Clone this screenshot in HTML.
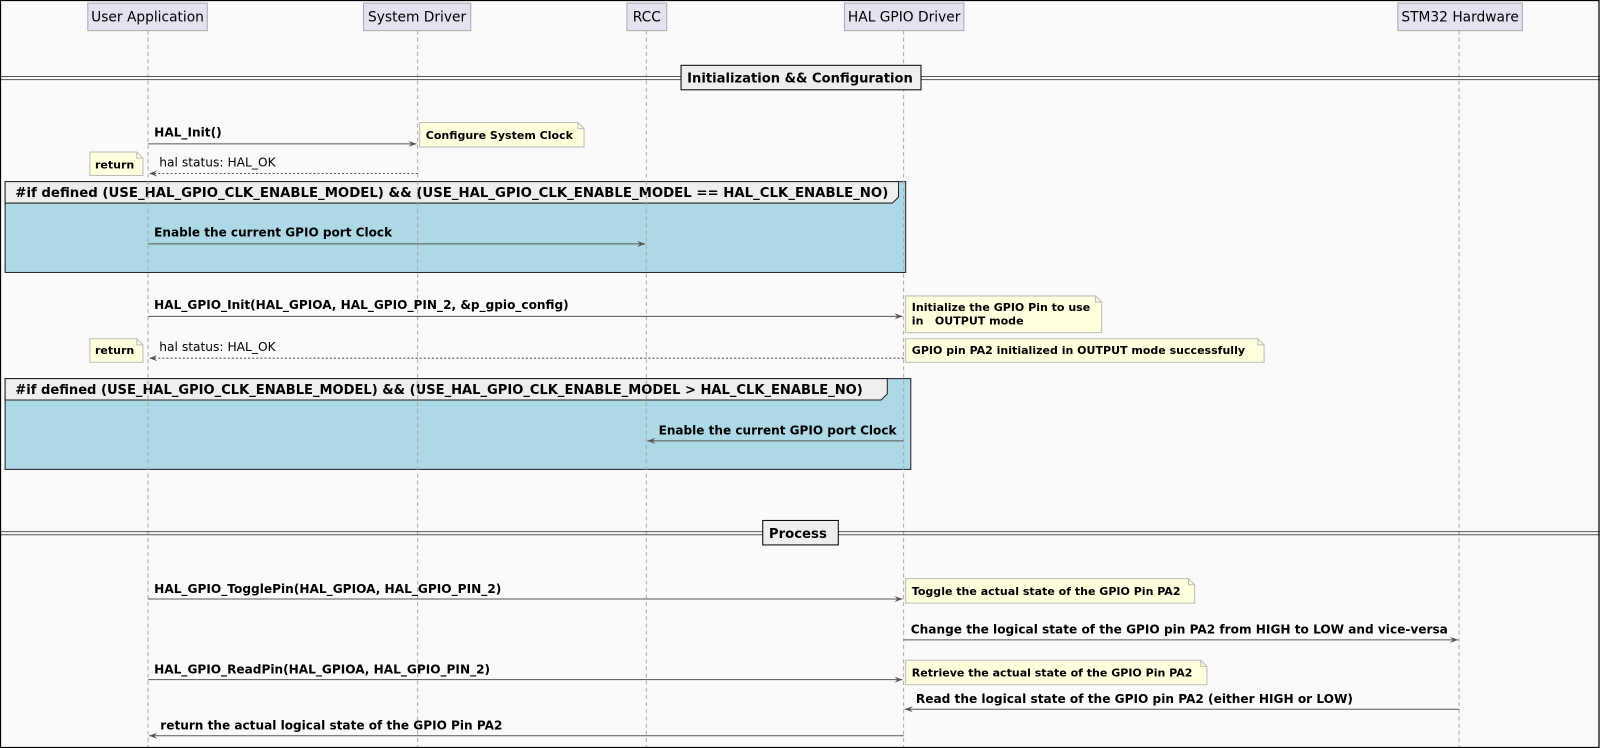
<!DOCTYPE html>
<html><head><meta charset="utf-8"><style>
html,body{margin:0;padding:0;background:#fafafa;}
svg{display:block;}
text{font-family:"DejaVu Sans","Liberation Sans",sans-serif;fill:#000;}
.b{font-weight:bold;font-size:11.9px;}
.n{font-weight:bold;font-size:10.8px;}
.p{font-size:13.5px;}
.g{font-weight:bold;font-size:13px;}
.ll{stroke:#aaa;stroke-dasharray:4,3;stroke-width:1;}
.ar{stroke:#555;stroke-width:1;fill:none;}
.dar{stroke:#555;stroke-width:1;stroke-dasharray:2,2;fill:none;}
.note{fill:#ffffdd;stroke:#bbb;stroke-width:1;}
.pt{fill:#e2e2f0;stroke:#aaa;stroke-width:1;}
</style></head><body>
<svg width="1600" height="748" viewBox="0 0 1567 733" preserveAspectRatio="none" xmlns="http://www.w3.org/2000/svg">
<rect x="0" y="0" width="1567" height="733" fill="#fafafa"/>
<rect x="5" y="178" width="882" height="89" fill="#add8e6" stroke="#222" stroke-width="1"/>
<path d="M5 178 H880 V193 L874 199 H5 Z" fill="#eeeeee" stroke="#222" stroke-width="1"/>
<text class="g" x="15" y="193" textLength="855" lengthAdjust="spacingAndGlyphs">#if defined (USE_HAL_GPIO_CLK_ENABLE_MODEL) &amp;&amp; (USE_HAL_GPIO_CLK_ENABLE_MODEL == HAL_CLK_ENABLE_NO)</text>
<rect x="5" y="371" width="887" height="89" fill="#add8e6" stroke="#222" stroke-width="1"/>
<path d="M5 371 H869 V386 L863 392 H5 Z" fill="#eeeeee" stroke="#222" stroke-width="1"/>
<text class="g" x="15" y="386" textLength="830" lengthAdjust="spacingAndGlyphs">#if defined (USE_HAL_GPIO_CLK_ENABLE_MODEL) &amp;&amp; (USE_HAL_GPIO_CLK_ENABLE_MODEL &gt; HAL_CLK_ENABLE_NO)</text>
<line class="ll" x1="145" y1="30" x2="145" y2="733"/>
<line class="ll" x1="409" y1="30" x2="409" y2="733"/>
<line class="ll" x1="633" y1="30" x2="633" y2="733"/>
<line class="ll" x1="885" y1="30" x2="885" y2="733"/>
<line class="ll" x1="1429" y1="30" x2="1429" y2="733"/>
<rect class="pt" x="86" y="3" width="117" height="27"/><text class="p" x="144.5" y="21" text-anchor="middle">User Application</text>
<rect class="pt" x="356" y="3" width="105" height="27"/><text class="p" x="408.5" y="21" text-anchor="middle">System Driver</text>
<rect class="pt" x="614" y="3" width="39" height="27"/><text class="p" x="633.5" y="21" text-anchor="middle">RCC</text>
<rect class="pt" x="827" y="3" width="117" height="27"/><text class="p" x="885.5" y="21" text-anchor="middle">HAL GPIO Driver</text>
<rect class="pt" x="1369" y="3" width="122" height="27"/><text class="p" x="1430" y="21" text-anchor="middle">STM32 Hardware</text>
<line x1="0" y1="75" x2="1567" y2="75" stroke="#555"/><line x1="0" y1="78" x2="1567" y2="78" stroke="#555"/>
<rect x="667" y="64" width="235" height="24" fill="#eeeeee" stroke="#000"/>
<text class="g" x="673" y="81" textLength="221" lengthAdjust="spacingAndGlyphs">Initialization &amp;&amp; Configuration</text>
<line x1="0" y1="521" x2="1567" y2="521" stroke="#555"/><line x1="0" y1="524" x2="1567" y2="524" stroke="#555"/>
<rect x="747" y="510" width="74" height="24" fill="#eeeeee" stroke="#000"/>
<text class="g" x="753" y="527">Process</text>
<defs>
<marker id="a" markerWidth="8" markerHeight="6" refX="8" refY="3" orient="auto" markerUnits="userSpaceOnUse"><path d="M0 0 L8 3 L0 6 L3 3 Z" fill="#555"/></marker>
</defs>
<line class="ar" x1="145" y1="141" x2="408" y2="141" marker-end="url(#a)"/><text class="b" x="151" y="134">HAL_Init()</text>
<line class="dar" x1="409" y1="170" x2="146" y2="170" marker-end="url(#a)"/><text x="156" y="163" style="font-size:12px">hal status: HAL_OK</text>
<line class="ar" x1="145" y1="239" x2="632" y2="239" marker-end="url(#a)"/><text class="b" x="151" y="232" textLength="233" lengthAdjust="spacingAndGlyphs">Enable the current GPIO port Clock</text>
<line class="ar" x1="145" y1="310" x2="884" y2="310" marker-end="url(#a)"/><text class="b" x="151" y="303" textLength="406" lengthAdjust="spacingAndGlyphs">HAL_GPIO_Init(HAL_GPIOA, HAL_GPIO_PIN_2, &amp;p_gpio_config)</text>
<line class="dar" x1="885" y1="351" x2="146" y2="351" marker-end="url(#a)"/><text x="156" y="344" style="font-size:12px">hal status: HAL_OK</text>
<line class="ar" x1="885" y1="432" x2="634" y2="432" marker-end="url(#a)"/><text class="b" x="645" y="426" textLength="233" lengthAdjust="spacingAndGlyphs">Enable the current GPIO port Clock</text>
<line class="ar" x1="145" y1="587" x2="884" y2="587" marker-end="url(#a)"/><text class="b" x="151" y="581" textLength="340" lengthAdjust="spacingAndGlyphs">HAL_GPIO_TogglePin(HAL_GPIOA, HAL_GPIO_PIN_2)</text>
<line class="ar" x1="885" y1="627" x2="1428" y2="627" marker-end="url(#a)"/><text class="b" x="892" y="621" textLength="526" lengthAdjust="spacingAndGlyphs">Change the logical state of the GPIO pin PA2 from HIGH to LOW and vice-versa</text>
<line class="ar" x1="145" y1="666" x2="884" y2="666" marker-end="url(#a)"/><text class="b" x="151" y="660" textLength="329" lengthAdjust="spacingAndGlyphs">HAL_GPIO_ReadPin(HAL_GPIOA, HAL_GPIO_PIN_2)</text>
<line class="ar" x1="1429" y1="695" x2="886" y2="695" marker-end="url(#a)"/><text class="b" x="897" y="689" textLength="428" lengthAdjust="spacingAndGlyphs">Read the logical state of the GPIO pin PA2 (either HIGH or LOW)</text>
<line class="ar" x1="885" y1="721" x2="146" y2="721" marker-end="url(#a)"/><text class="b" x="157" y="715" textLength="335" lengthAdjust="spacingAndGlyphs">return the actual logical state of the GPIO Pin PA2</text>
<path class="note" d="M411 120 H566 L572 126 V144 H411 Z"/><path d="M566 120 V126 H572" fill="none" stroke="#bbb"/><text class="n" x="417" y="136">Configure System Clock</text>
<path class="note" d="M88 149 H134 L140 155 V172 H88 Z"/><path d="M134 149 V155 H140" fill="none" stroke="#bbb"/><text class="n" x="93" y="165">return</text>
<path class="note" d="M887 290 H1073 L1079 296 V326 H887 Z"/><path d="M1073 290 V296 H1079" fill="none" stroke="#bbb"/><text class="n" x="893" y="305">Initialize the GPIO Pin to use</text><text class="n" x="893" y="318" xml:space="preserve">in   OUTPUT mode</text>
<path class="note" d="M88 332 H134 L140 338 V355 H88 Z"/><path d="M134 332 V338 H140" fill="none" stroke="#bbb"/><text class="n" x="93" y="347">return</text>
<path class="note" d="M887 332 H1232 L1238 338 V355 H887 Z"/><path d="M1232 332 V338 H1238" fill="none" stroke="#bbb"/><text class="n" x="893" y="347">GPIO pin PA2 initialized in OUTPUT mode successfully</text>
<path class="note" d="M887 567 H1164 L1170 573 V591 H887 Z"/><path d="M1164 567 V573 H1170" fill="none" stroke="#bbb"/><text class="n" x="893" y="583">Toggle the actual state of the GPIO Pin PA2</text>
<path class="note" d="M887 647 H1176 L1182 653 V671 H887 Z"/><path d="M1176 647 V653 H1182" fill="none" stroke="#bbb"/><text class="n" x="893" y="663">Retrieve the actual state of the GPIO Pin PA2</text>
<rect x="0.5" y="0.5" width="1565.5" height="732" fill="none" stroke="#000" stroke-width="1.2"/>
</svg>
</body></html>
